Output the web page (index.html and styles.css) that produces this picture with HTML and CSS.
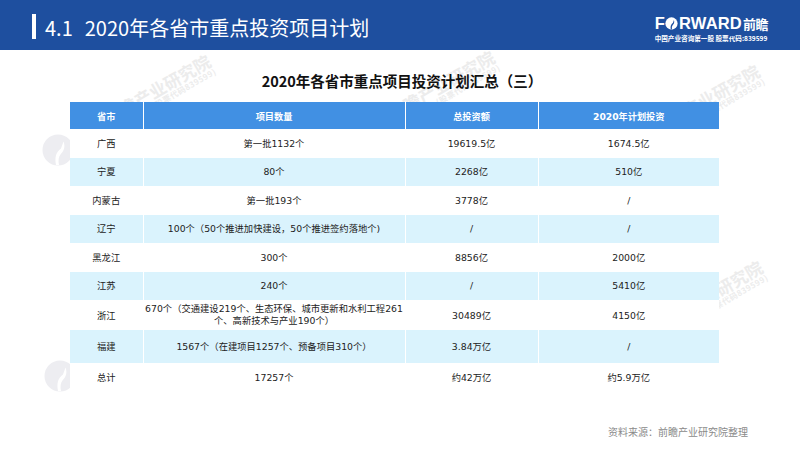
FILE: index.html
```html
<!DOCTYPE html>
<html lang="zh-CN">
<head>
<meta charset="utf-8">
<title>2020年各省市重点投资项目计划</title>
<link rel="stylesheet" href="styles.css">
</head>
<body>
<div class="slide">
  <header class="topbar">
    <span class="mark"></span>
    <h1 class="title"><span class="sec">4.1</span><span class="title-text">2020年各省市重点投资项目计划</span></h1>
    <div class="logo">
      <div class="brand">F<svg class="globe" viewBox="0 0 14 14" aria-hidden="true"><circle cx="7" cy="7" r="6.6" fill="#fff"/><path d="M6.2 13.4 C5.6 10 6.4 7.6 8.6 6.2 L9.6 3.2 C10.4 5.2 9.8 7.2 8.4 8.6 C7.4 9.8 7.2 11.6 7.6 13.4 Z" fill="#1e4f9f"/></svg>RWARD<span class="brand-cn">前瞻</span></div>
      <div class="tagline">中国产业咨询第一股 股票代码:839599</div>
    </div>
  </header>

  <div class="watermarks" aria-hidden="true">
    <div class="wm wm1"><span class="wm-big">前瞻产业研究院</span><span class="wm-small">(股票代码839599)</span></div>
    <div class="wm wm2"><span class="wm-big">前瞻产业研究院</span><span class="wm-small">(股票代码839599)</span></div>
    <div class="wm wm3"><span class="wm-big">前瞻产业研究院</span><span class="wm-small">(股票代码839599)</span></div>
    <div class="wm wm4"><span class="wm-big">前瞻产业研究院</span><span class="wm-small">(股票代码839599)</span></div>
    <svg class="wm-logo wml1" viewBox="0 0 32 32"><circle cx="16" cy="16" r="15.5" fill="#ededf1"/><path d="M14 31 C12.5 23 14 18 19 14.5 L21.5 7.5 C23.5 12.5 22 17 18.8 20 C16.6 22.6 16 26.5 17 31 Z" fill="#fff"/></svg>
    <svg class="wm-logo wml2" viewBox="0 0 32 32"><circle cx="16" cy="16" r="15.5" fill="#ededf1"/><path d="M14 31 C12.5 23 14 18 19 14.5 L21.5 7.5 C23.5 12.5 22 17 18.8 20 C16.6 22.6 16 26.5 17 31 Z" fill="#fff"/></svg>
  </div>

  <main class="content">
    <h2 class="table-title">2020年各省市重点项目投资计划汇总（三）</h2>
    <table class="plan">
      <colgroup>
        <col class="c1"><col class="c2"><col class="c3"><col class="c4">
      </colgroup>
      <thead>
        <tr><th>省市</th><th>项目数量</th><th>总投资额</th><th>2020年计划投资</th></tr>
      </thead>
      <tbody>
        <tr><td>广西</td><td>第一批1132个</td><td>19619.5亿</td><td>1674.5亿</td></tr>
        <tr class="alt"><td>宁夏</td><td>80个</td><td>2268亿</td><td>510亿</td></tr>
        <tr><td>内蒙古</td><td>第一批193个</td><td>3778亿</td><td>/</td></tr>
        <tr class="alt"><td>辽宁</td><td>100个（50个推进加快建设，50个推进签约落地个)</td><td>/</td><td>/</td></tr>
        <tr><td>黑龙江</td><td>300个</td><td>8856亿</td><td>2000亿</td></tr>
        <tr class="alt"><td>江苏</td><td>240个</td><td>/</td><td>5410亿</td></tr>
        <tr class="two"><td>浙江</td><td class="wrap">670个（交通建设219个、生态环保、城市更新和水利工程261<br>个、高新技术与产业190个）</td><td>30489亿</td><td>4150亿</td></tr>
        <tr class="alt tall"><td>福建</td><td>1567个（在建项目1257个、预备项目310个）</td><td>3.84万亿</td><td>/</td></tr>
        <tr class="total"><td>总计</td><td>17257个</td><td>约42万亿</td><td>约5.9万亿</td></tr>
      </tbody>
    </table>
    <p class="source">资料来源：前瞻产业研究院整理</p>
  </main>
</div>
</body>
</html>
```

FILE: styles.css
```css
* {
  box-sizing: border-box;
  margin: 0;
  padding: 0;
}

body {
  margin: 0;
  width: 800px;
  height: 450px;
  overflow: hidden;
  background: #ffffff;
  font-family: "DejaVu Sans", "Noto Sans CJK SC", sans-serif;
}

.slide {
  position: relative;
  width: 800px;
  height: 450px;
  overflow: hidden;
}

/* ---------- top bar ---------- */
.topbar {
  position: relative;
  z-index: 2;
  height: 50px;
  background: #1e4f9f;
  display: flex;
  align-items: flex-start;
  padding: 0 32px 0 32px;
  color: #ffffff;
}

.mark {
  width: 4px;
  height: 25px;
  margin-top: 14px;
  background: #ffffff;
}

.title {
  display: flex;
  margin-top: 16px;
  margin-left: 9px;
  font-family: "Noto Sans CJK SC", sans-serif;
  font-weight: 400;
  font-size: 20px;
  line-height: 24px;
  color: #ffffff;
  white-space: nowrap;
}

.sec {
  margin-right: 12px;
}

.logo {
  margin-left: auto;
  margin-top: 15px;
  display: flex;
  flex-direction: column;
  align-items: flex-start;
}

.brand {
  display: flex;
  align-items: center;
  font-family: "Liberation Sans", sans-serif;
  font-weight: bold;
  font-size: 16.5px;
  line-height: 17px;
  letter-spacing: 0.2px;
  color: #ffffff;
}

.globe {
  width: 13px;
  height: 13px;
  margin: 0 0.5px;
}

.brand-cn {
  font-family: "Noto Sans CJK SC", sans-serif;
  font-weight: bold;
  font-size: 13px;
  letter-spacing: -0.5px;
  margin-left: 1px;
}

.tagline {
  margin-top: 2px;
  font-family: "Noto Sans CJK SC", sans-serif;
  font-weight: bold;
  font-size: 6.6px;
  line-height: 8px;
  color: #ffffff;
  white-space: nowrap;
}

/* ---------- watermark ---------- */
.watermarks {
  position: absolute;
  left: 0;
  top: 0;
  width: 800px;
  height: 450px;
  z-index: 0;
  pointer-events: none;
}

.wm {
  position: absolute;
  display: flex;
  flex-direction: column;
  align-items: flex-end;
  transform: rotate(-30deg);
  transform-origin: 100% 50%;
  font-family: "Noto Sans CJK SC", sans-serif;
  font-weight: bold;
  color: #ececec;
  white-space: nowrap;
  line-height: 1.05;
}

.wm-big {
  font-size: 17px;
}

.wm-small {
  font-size: 8px;
  letter-spacing: 0.5px;
}

.wm1 { right: 589px; top: 50px; }
.wm2 { right: 305px; top: 46px; }
.wm3 { right: 40px; top: 60px; }
.wm4 { right: 37px; top: 256px; }

.wm-logo {
  position: absolute;
  width: 32px;
  height: 32px;
}

.wml1 { left: 42px; top: 134px; }
.wml2 { left: 44px; top: 360px; }

/* ---------- content ---------- */
.content {
  position: relative;
  z-index: 1;
  display: flex;
  flex-direction: column;
}

.table-title {
  margin-top: 21px;
  padding-left: 4px;
  text-align: center;
  font-family: "Noto Sans CJK SC", sans-serif;
  font-weight: bold;
  font-size: 14.5px;
  line-height: 20px;
  color: #111111;
}

.plan {
  margin-top: 11px;
  margin-left: 70px;
  width: 649px;
  border-collapse: collapse;
  table-layout: fixed;
  background: #ffffff;
}

.c1 { width: 73px; }
.c2 { width: 262px; }
.c3 { width: 133px; }
.c4 { width: 181px; }

.plan th {
  height: 27px;
  padding: 0;
  background: #4190e3;
  color: #ffffff;
  font-weight: bold;
  font-size: 9.2px;
  text-align: center;
  vertical-align: middle;
  border-right: 1px solid #ffffff;
}

.plan td {
  height: 28.5px;
  padding: 0;
  text-align: center;
  vertical-align: middle;
  font-size: 9.3px;
  line-height: 13px;
  color: #222222;
  border-right: 1px solid #ffffff;
  white-space: nowrap;
}

.plan th:last-child,
.plan td:last-child {
  border-right: none;
}

.plan tr.alt td {
  background: #daf3fd;
}

.plan tr.two td {
  height: 30px;
}

.plan tr.tall td {
  height: 33px;
}

.plan tr.total td {
  height: 29px;
}

.plan td.wrap {
  line-height: 12.5px;
}

.source {
  margin-top: 33px;
  padding-right: 52px;
  text-align: right;
  font-family: "Noto Sans CJK SC", sans-serif;
  font-size: 10px;
  line-height: 14px;
  color: #8a8a8a;
}
```
